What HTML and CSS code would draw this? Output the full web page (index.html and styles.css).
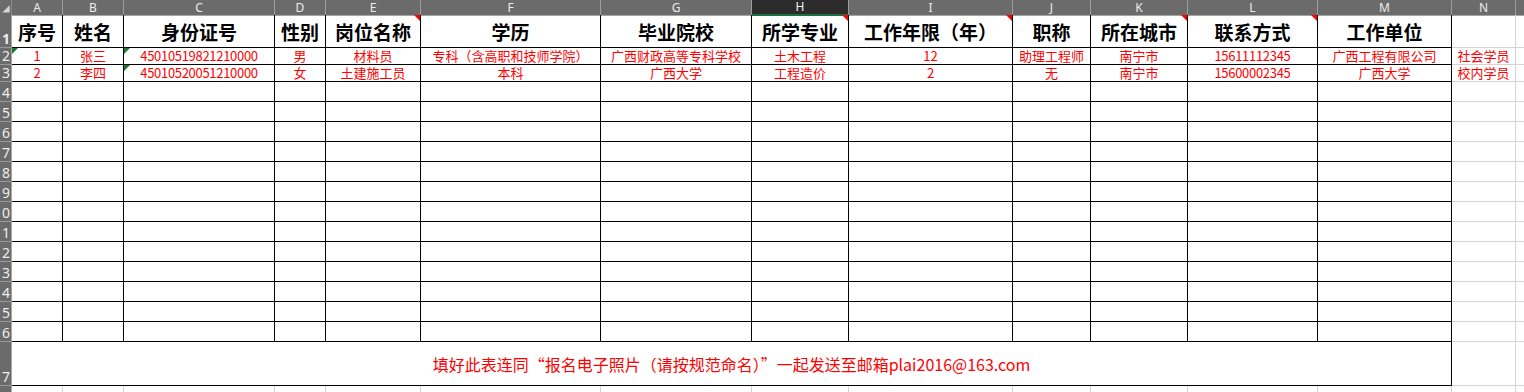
FILE: index.html
```html
<!DOCTYPE html>
<html lang="zh-CN">
<head>
<meta charset="utf-8">
<title>报名表</title>
<link rel="stylesheet" href="styles.css">
</head>
<body>
<div class="sheet">
  <div class="row colhead">
    <div class="corner"><svg width="12" height="15" viewBox="0 0 12 15"><polygon points="10.5,5 10.5,13 2.5,13" fill="#d6d6d6"/></svg></div>
    <div>A</div><div>B</div><div>C</div><div>D</div><div>E</div><div>F</div><div>G</div><div class="sel">H</div><div>I</div><div>J</div><div>K</div><div>L</div><div>M</div><div>N</div><div></div>
  </div>

  <div class="row r1 head">
    <div class="rh">1</div>
    <div>序号</div><div>姓名</div><div>身份证号</div><div>性别</div><div class="cm">岗位名称</div><div>学历</div><div>毕业院校</div><div class="cm">所学专业</div><div class="cm">工作年限（年）</div><div>职称</div><div class="cm">所在城市</div><div class="cm">联系方式</div><div>工作单位</div><div class="g"></div><div class="g"></div>
  </div>

  <div class="row r2 d">
    <div class="rh">2</div>
    <div class="tx">1</div><div>张三</div><div class="tx num">45010519821210000</div><div>男</div><div>材料员</div><div>专科（含高职和技师学院）</div><div>广西财政高等专科学校</div><div>土木工程</div><div>12</div><div>助理工程师</div><div>南宁市</div><div class="num">15611112345</div><div>广西工程有限公司</div><div class="g">社会学员</div><div class="g"></div>
  </div>

  <div class="row r2 d">
    <div class="rh">3</div>
    <div>2</div><div>李四</div><div class="tx num">45010520051210000</div><div>女</div><div>土建施工员</div><div>本科</div><div>广西大学</div><div>工程造价</div><div>2</div><div>无</div><div>南宁市</div><div class="num">15600002345</div><div>广西大学</div><div class="g">校内学员</div><div class="g"></div>
  </div>

  <div class="row r20"><div class="rh">4</div><div></div><div></div><div></div><div></div><div></div><div></div><div></div><div></div><div></div><div></div><div></div><div></div><div></div><div class="g"></div><div class="g"></div></div>
  <div class="row r20"><div class="rh">5</div><div></div><div></div><div></div><div></div><div></div><div></div><div></div><div></div><div></div><div></div><div></div><div></div><div></div><div class="g"></div><div class="g"></div></div>
  <div class="row r20"><div class="rh">6</div><div></div><div></div><div></div><div></div><div></div><div></div><div></div><div></div><div></div><div></div><div></div><div></div><div></div><div class="g"></div><div class="g"></div></div>
  <div class="row r20"><div class="rh">7</div><div></div><div></div><div></div><div></div><div></div><div></div><div></div><div></div><div></div><div></div><div></div><div></div><div></div><div class="g"></div><div class="g"></div></div>
  <div class="row r20"><div class="rh">8</div><div></div><div></div><div></div><div></div><div></div><div></div><div></div><div></div><div></div><div></div><div></div><div></div><div></div><div class="g"></div><div class="g"></div></div>
  <div class="row r20"><div class="rh">9</div><div></div><div></div><div></div><div></div><div></div><div></div><div></div><div></div><div></div><div></div><div></div><div></div><div></div><div class="g"></div><div class="g"></div></div>
  <div class="row r20"><div class="rh">10</div><div></div><div></div><div></div><div></div><div></div><div></div><div></div><div></div><div></div><div></div><div></div><div></div><div></div><div class="g"></div><div class="g"></div></div>
  <div class="row r20"><div class="rh">11</div><div></div><div></div><div></div><div></div><div></div><div></div><div></div><div></div><div></div><div></div><div></div><div></div><div></div><div class="g"></div><div class="g"></div></div>
  <div class="row r20"><div class="rh">12</div><div></div><div></div><div></div><div></div><div></div><div></div><div></div><div></div><div></div><div></div><div></div><div></div><div></div><div class="g"></div><div class="g"></div></div>
  <div class="row r20"><div class="rh">13</div><div></div><div></div><div></div><div></div><div></div><div></div><div></div><div></div><div></div><div></div><div></div><div></div><div></div><div class="g"></div><div class="g"></div></div>
  <div class="row r20"><div class="rh">14</div><div></div><div></div><div></div><div></div><div></div><div></div><div></div><div></div><div></div><div></div><div></div><div></div><div></div><div class="g"></div><div class="g"></div></div>
  <div class="row r20"><div class="rh">15</div><div></div><div></div><div></div><div></div><div></div><div></div><div></div><div></div><div></div><div></div><div></div><div></div><div></div><div class="g"></div><div class="g"></div></div>
  <div class="row r20"><div class="rh">16</div><div></div><div></div><div></div><div></div><div></div><div></div><div></div><div></div><div></div><div></div><div></div><div></div><div></div><div class="g"></div><div class="g"></div></div>

  <div class="row r17">
    <div class="rh">17</div>
    <div class="note">填好此表连同“报名电子照片（请按规范命名）”一起发送至邮箱plai2016@163.com</div>
    <div class="g"></div><div class="g"></div>
  </div>

  <div class="row r20 tail">
    <div class="rh">18</div><div></div><div></div><div></div><div></div><div></div><div></div><div></div><div></div><div></div><div></div><div></div><div></div><div></div><div></div><div></div>
  </div>
</div>
</body>
</html>
```

FILE: styles.css
```css
:root {
  --cols: 12px 51px 61px 151px 51px 95px 180px 151px 97px 164px 78px 97px 130px 134px 64px 40px;
}

html, body {
  margin: 0;
  padding: 0;
  background: #ffffff;
}

body {
  overflow: hidden;
  font-family: "Noto Sans CJK SC", "Noto Sans", sans-serif;
}

.sheet {
  width: 1524px;
  height: 392px;
  overflow: hidden;
}

.row {
  display: grid;
  grid-template-columns: var(--cols);
}

.row > div {
  box-sizing: border-box;
  border-right: 1px solid #000;
  border-bottom: 1px solid #000;
  display: flex;
  align-items: center;
  justify-content: center;
  min-width: 0;
  white-space: nowrap;
  position: relative;
  line-height: 1.1;
}

.row > .g,
.tail > div {
  border-right-color: #d4d4d4;
  border-bottom-color: #d4d4d4;
}

/* column header bar */
.colhead { height: 15px; }
.colhead > div {
  background: #6b6b6b;
  color: #ececec;
  font-family: "Noto Sans", "Liberation Sans", sans-serif;
  font-size: 12px;
  line-height: 13px;
  border-right: 1px solid #9c9c9c;
  border-bottom: 1px solid #a4a4a4;
}
.colhead > .sel {
  background: #2c2c2c;
  color: #f4f4f4;
  line-height: 12px;
  border-bottom: 2px solid #1e6f42;
}
.colhead > .corner {
  border-right-color: #8a8a8a;
}
.corner svg { display: block; }

/* row headers (narrow, numbers clipped on the left as in the sheet) */
.row > .rh {
  background: #6b6b6b;
  color: #eeeeee;
  font-family: "Noto Sans", "Liberation Sans", sans-serif;
  font-size: 14px;
  line-height: 14px;
  direction: rtl;
  justify-content: flex-start;
  align-items: flex-end;
  overflow: hidden;
  padding-right: 1px;
  padding-bottom: 1px;
  border-right: 1px solid #a6a6a6;
  border-bottom: 1px solid #9a9a9a;
}

.r1 { height: 33px; }
.r2 { height: 17px; }
.r20 { height: 20px; }
.r17 { height: 44px; }

.head > div {
  font-size: 19px;
  font-weight: 700;
  color: #000;
  padding-top: 3px;
}

.d > div {
  font-size: 13px;
  color: #ff0000;
}

.d > .num {
  letter-spacing: -0.3px;
}

/* comment indicator (red) */
.cm::after {
  content: "";
  position: absolute;
  top: 0;
  right: 0;
  border-top: 6px solid #ff0000;
  border-left: 6px solid transparent;
}

/* number-stored-as-text indicator (green) */
.tx::before {
  content: "";
  position: absolute;
  top: 0;
  left: 0;
  border-top: 6px solid #1b7a32;
  border-right: 6px solid transparent;
}

.row > .note {
  grid-column: 2 / 15;
  color: #ff0000;
  font-size: 16px;
  padding-top: 3px;
}
```
